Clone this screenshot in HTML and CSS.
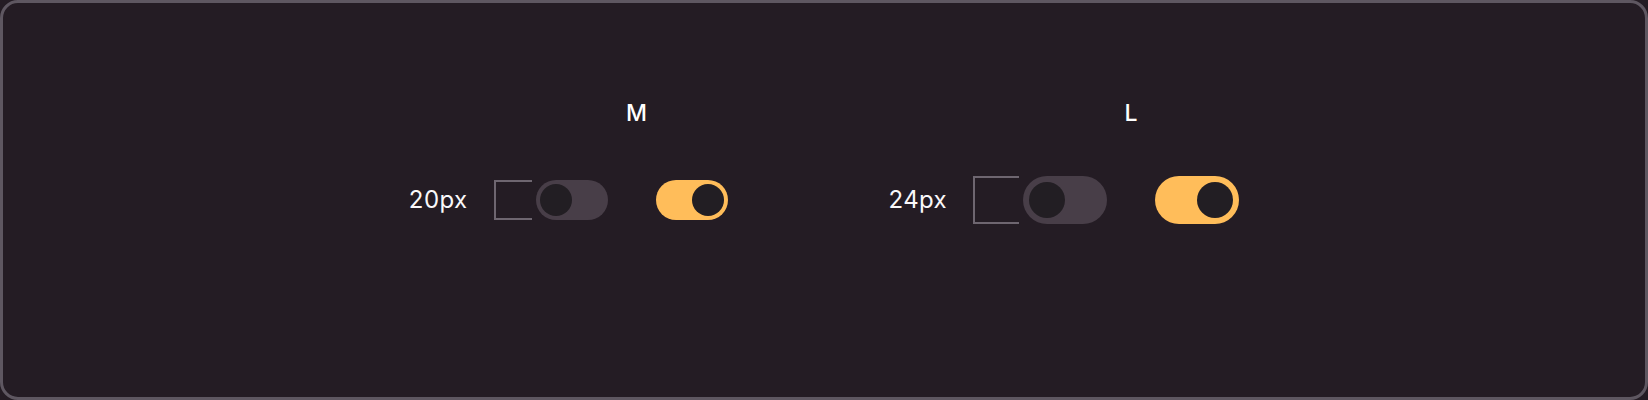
FILE: index.html
```html
<!DOCTYPE html>
<html>
<head>
<meta charset="utf-8">
<link rel="stylesheet" href="styles.css">
</head>
<body>
<div class="frame">
  <div class="groups">
    <div class="group size-m">
      <div class="head">M</div>
      <div class="lead"><span class="label">20px</span><span class="bracket"></span></div>
      <div class="pair">
        <div class="toggle"><div class="thumb"></div></div>
        <div class="toggle on"><div class="thumb"></div></div>
      </div>
    </div>
    <div class="group size-l">
      <div class="head">L</div>
      <div class="lead"><span class="label">24px</span><span class="bracket"></span></div>
      <div class="pair">
        <div class="toggle"><div class="thumb"></div></div>
        <div class="toggle on"><div class="thumb"></div></div>
      </div>
    </div>
  </div>
</div>
</body>
</html>
```
FILE: styles.css
```css
html, body {
  margin: 0;
  padding: 0;
  background: #241c24;
}
body {
  width: 1648px;
  height: 400px;
  font-family: Inter, "Noto Sans", sans-serif;
}
.frame {
  box-sizing: border-box;
  width: 1648px;
  height: 400px;
  border: 3px solid #5e5761;
  border-radius: 18px;
  background: #241c24;
  padding-top: 97px;
}
.groups {
  display: flex;
  justify-content: center;
  gap: 161px;
}
.group {
  display: grid;
  grid-template-columns: auto auto;
  grid-template-rows: 26px 48px;
  row-gap: 50px;
  align-items: center;
}
.head {
  grid-column: 2;
  grid-row: 1;
  text-align: center;
  color: #ffffff;
  font-size: 23px;
  font-weight: 500;
  line-height: 26px;
}
.size-m .head {
  padding-left: 10px;
}
.lead {
  grid-column: 1;
  grid-row: 2;
  display: flex;
  align-items: center;
}
.label {
  color: #faf8fa;
  font-size: 24px;
  font-weight: 400;
  letter-spacing: 0.4px;
  line-height: 28px;
  margin-right: 26px;
}
.bracket {
  box-sizing: border-box;
  border: 2px solid #6e6670;
  border-right: none;
  margin-right: 4px;
}
.pair {
  grid-column: 2;
  grid-row: 2;
  display: flex;
  align-items: center;
  gap: 48px;
}
.toggle {
  box-sizing: border-box;
  display: flex;
  align-items: center;
  background: #483e48;
}
.toggle.on {
  background: #ffbd5a;
  justify-content: flex-end;
}
.thumb {
  border-radius: 50%;
  background: #221e23;
}
.size-m .bracket { width: 38px; height: 40px; }
.size-m .toggle { width: 72px; height: 40px; border-radius: 20px; padding: 4px; }
.size-m .thumb { width: 32px; height: 32px; }
.size-l .bracket { width: 46px; height: 48px; }
.size-l .toggle { width: 84px; height: 48px; border-radius: 24px; padding: 6px; }
.size-l .thumb { width: 36px; height: 36px; }
```
